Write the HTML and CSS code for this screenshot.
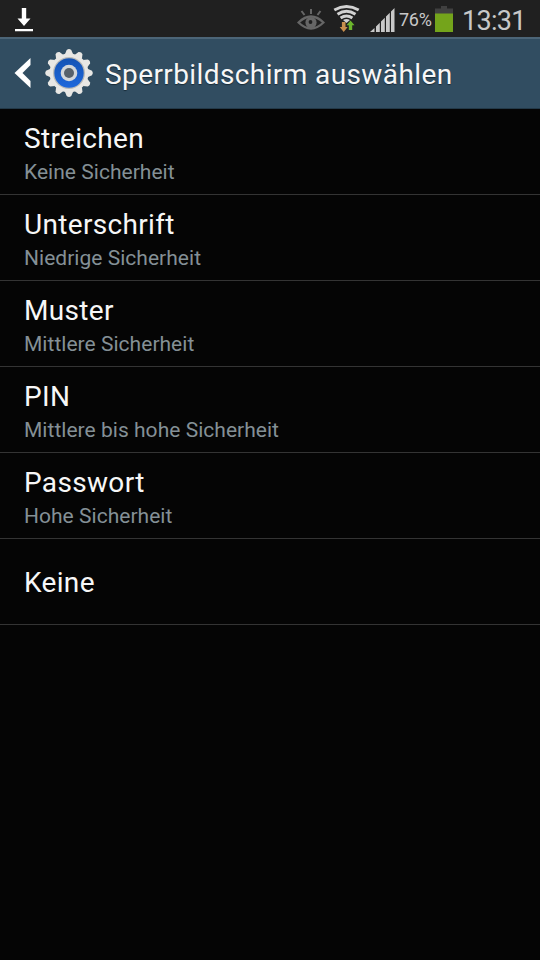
FILE: index.html
```html
<!DOCTYPE html>
<html lang="de">
<head>
<meta charset="utf-8">
<title>Sperrbildschirm auswählen</title>
<link rel="stylesheet" href="styles.css">
</head>
<body>
<div class="status">
  <svg class="download" width="20" height="26" viewBox="0 0 20 26"><path d="M7.800 2h4.400v10.500h4.300L10 20l-6.500-7.500h4.300z M1 23h18v2.200H1z" fill="#fff"/></svg>
  <svg class="eye" width="28" height="24" viewBox="297 8 28 24"><g fill="none" stroke="#666"><path d="M298.500 22.500Q311 10.500 323.500 22.500Q311 34.500 298.500 22.500z" stroke-width="2.200"/><path d="M311 9v5M301.500 11l3 4M320.500 11l-3 4" stroke-width="2"/></g><circle cx="311" cy="22.500" r="5.600" fill="#666"/><circle cx="310.500" cy="22" r="1.900" fill="#202020"/></svg>
  <svg class="wifi" width="28" height="28" viewBox="333 4 28 28"><g fill="none" stroke="#d2d2d2" stroke-width="3"><path d="M334.300 10Q346.500 3 358.700 10M337.500 14.200Q346.500 8.500 355.500 14.200M340.600 18Q346.500 14 352.400 18"/></g><path d="M343 20q3.500-2 7 0L346.500 23z" fill="#d2d2d2"/><path d="M341.900 22h3.600v5h2.200l-4 5-4-5h2.200z" fill="#c98f4d"/><path d="M350.500 20.500l4 4.800h-2.300v4.700h-3.400v-4.700h-2.300z" fill="#6cb52c"/></svg>
  <svg class="signal" width="25" height="24" viewBox="370 8 25 24"><path d="M370 32l4.500-4v4zM376 32v-5.500l3.800-3.800V32zM381 32V21.500l3.800-3.800V32zM386 32V16.500l3.800-3.800V32zM391 32V11.500l3.500-3.500V32z" fill="#c8c8c8"/></svg>
  <span class="percent">76%</span>
  <svg class="battery" width="18" height="26" viewBox="0 0 18 26"><path d="M6 0h6v2.500h6V8H0V2.500h6z" fill="#404040"/><path d="M0 7.500h18V26H0z" fill="#74a41b"/></svg>
  <span class="clock">13:31</span>
</div>
<div class="header">
  <svg class="back" width="18" height="32" viewBox="0 0 18 32"><path d="M16.500 1v7L8.500 16l8 8v7L.5 16z" fill="#fff"/></svg>
  <svg class="gear" width="50" height="50" viewBox="-25 -25 50 50">
    <defs>
      <linearGradient id="blue" x2="0" y2="1"><stop stop-color="#1453b4"/><stop offset="1" stop-color="#1e68dc"/></linearGradient>
      <path id="tooth" d="M-4.200-18.500L-2.300-23Q0-24.800 2.300-23L4.200-18.500z"/>
    </defs>
    <g fill="#e8e7e4">
      <use href="#tooth"/><use href="#tooth" transform="rotate(30)"/><use href="#tooth" transform="rotate(60)"/><use href="#tooth" transform="rotate(90)"/><use href="#tooth" transform="rotate(120)"/><use href="#tooth" transform="rotate(150)"/><use href="#tooth" transform="rotate(180)"/><use href="#tooth" transform="rotate(210)"/><use href="#tooth" transform="rotate(240)"/><use href="#tooth" transform="rotate(270)"/><use href="#tooth" transform="rotate(300)"/><use href="#tooth" transform="rotate(330)"/>
      <circle r="19.500"/>
    </g>
    <circle r="16" fill="#b9bab8"/><circle r="14.700" fill="url(#blue)"/><circle r="8.300" fill="#d3d7da"/><circle r="5" fill="#56616b"/>
  </svg>
  <h1 class="title">Sperrbildschirm auswählen</h1>
</div>
<ul class="list">
  <li><b>Streichen</b><small>Keine Sicherheit</small></li>
  <li><b>Unterschrift</b><small>Niedrige Sicherheit</small></li>
  <li><b>Muster</b><small>Mittlere Sicherheit</small></li>
  <li><b>PIN</b><small>Mittlere bis hohe Sicherheit</small></li>
  <li><b>Passwort</b><small>Hohe Sicherheit</small></li>
  <li class="single"><b>Keine</b></li>
</ul>
</body>
</html>
```
FILE: styles.css
```css
* { box-sizing: border-box; }
body { margin: 0; height: 960px; background: #050505; color: #f7f7f7; font-family: Roboto, sans-serif; overflow: hidden; }
svg { display: block; flex: none; }
.status { height: 37px; background: #202020; display: flex; align-items: flex-start; padding-left: 14px; color: #c8c8c8; white-space: nowrap; }
.download { margin-top: 6px; margin-right: 263px; }
.eye { margin-top: 8px; margin-right: 8px; }
.wifi { margin-top: 4px; margin-right: 9px; }
.signal { margin-top: 8px; margin-right: 4px; }
.percent { width: 36px; font-size: 18px; line-height: 22px; margin-top: 9px; letter-spacing: -.3px; }
.battery { margin-top: 6px; margin-right: 9px; }
.clock { font-size: 27px; line-height: 32px; margin-top: 5px; letter-spacing: -.7px; }
.header { height: 72px; background: #314d61; border-top: 2px solid #4c6577; border-bottom: 1px solid #233948; display: flex; align-items: center; padding-left: 14px; }
.back { margin: 0 12px 2px 0; }
.gear { margin: 0 11px 2px 0; }
.title { margin: 0; font-size: 28px; font-weight: 400; line-height: 34px; letter-spacing: .4px; white-space: nowrap; text-shadow: 0 1px 1px #182b38; padding-top: 2px; }
.list { list-style: none; margin: 0; padding: 0; }
.list li { height: 86px; border-bottom: 1px solid #343434; padding: 13px 24px 0; }
.list b, .list small { display: block; font-weight: 400; white-space: nowrap; }
.list b { font-size: 28px; line-height: 34px; letter-spacing: .33px; }
.list small { font-size: 21px; line-height: 26px; margin-top: 3px; letter-spacing: .03px; color: #849096; }
.list .single { padding-top: 27px; }
```
